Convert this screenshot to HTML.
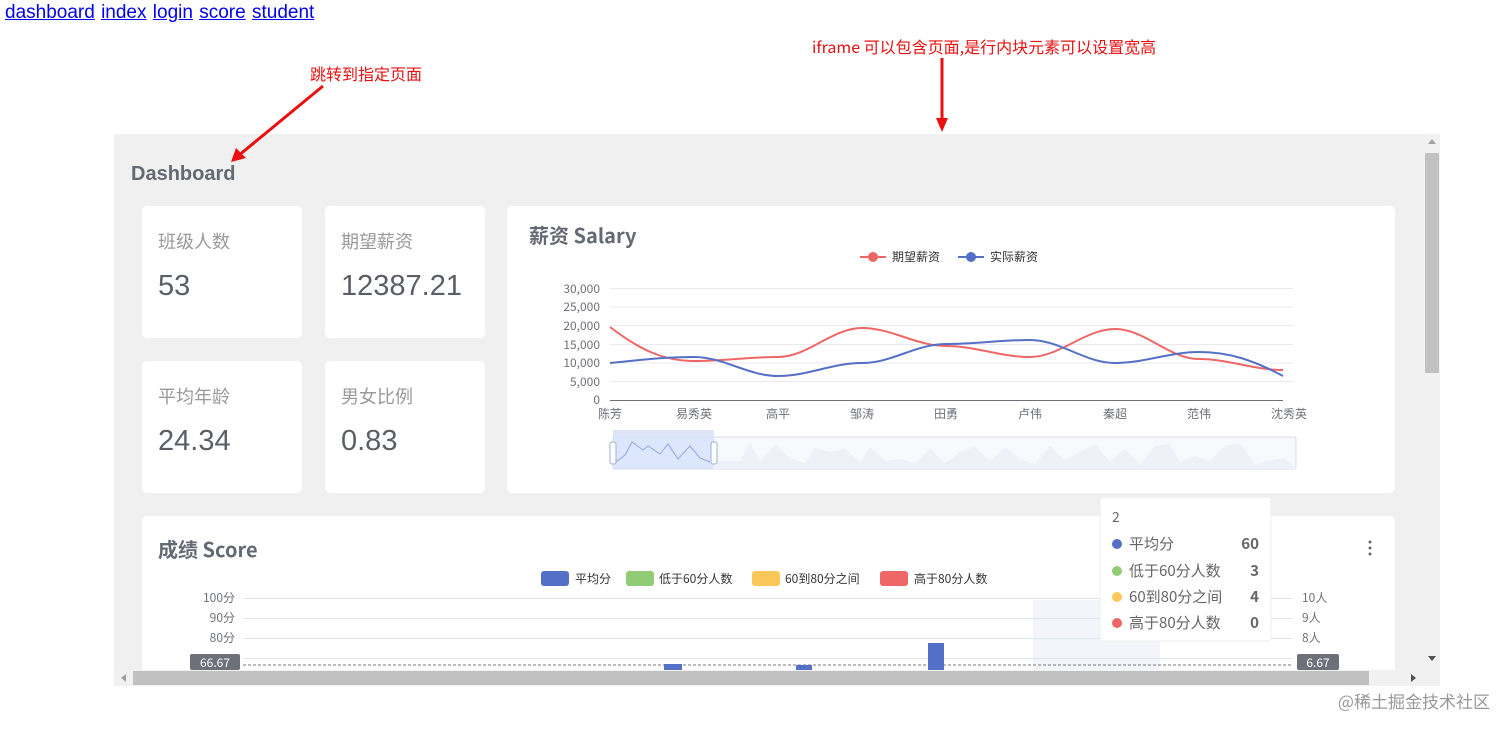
<!DOCTYPE html>
<html><head><meta charset="utf-8"><style>
*{box-sizing:border-box}
body{margin:0;width:1512px;height:733px;background:#fff;position:relative;overflow:hidden;font-family:"Liberation Sans","Noto Sans CJK SC",sans-serif}
.nav{position:absolute;left:5px;top:2px;font-size:19px;font-family:"Liberation Sans","Noto Sans CJK SC",sans-serif}
.nav a{color:#0000ee;text-decoration:underline;margin-right:1px}
.red{position:absolute;color:#e81010;font-size:16px;font-family:"Noto Sans CJK SC",sans-serif}
.frame{position:absolute;left:114px;top:134px;width:1326px;height:552px;background:#f0f0f0;overflow:hidden}
.card{position:absolute;background:#fff;border-radius:5px}
.lbl{position:absolute;left:16px;top:22px;font-size:18px;color:#999;font-family:"Noto Sans CJK SC",sans-serif}
.num{position:absolute;left:16px;top:64px;font-size:29px;color:#5a5f66}
.t{position:absolute;font-size:20px;font-weight:bold;color:#646a73;font-family:"Liberation Sans","Noto Sans CJK SC",sans-serif}
svg text{font-family:"Noto Sans CJK SC",sans-serif}
</style></head><body>
<div class="nav"><a>dashboard</a> <a>index</a> <a>login</a> <a>score</a> <a>student</a></div>
<div class="red" style="left:310px;top:61px">跳转到指定页面</div>
<div class="red" style="left:812px;top:34px">iframe 可以包含页面,是行内块元素可以设置宽高</div>
<div class="frame">
 <div class="t" style="left:17px;top:29px">Dashboard</div>
 <div class="card" style="left:28px;top:72px;width:160px;height:132px"><div class="lbl">班级人数</div><div class="num">53</div></div>
 <div class="card" style="left:211px;top:72px;width:160px;height:132px"><div class="lbl">期望薪资</div><div class="num">12387.21</div></div>
 <div class="card" style="left:28px;top:227px;width:160px;height:132px"><div class="lbl">平均年龄</div><div class="num">24.34</div></div>
 <div class="card" style="left:211px;top:227px;width:160px;height:132px"><div class="lbl">男女比例</div><div class="num">0.83</div></div>
 <div class="card" style="left:393px;top:72px;width:888px;height:287px"></div>
 <div class="card" style="left:28px;top:382px;width:1253px;height:200px"></div>
 <div style="position:absolute;left:1310px;top:0;width:16px;height:536px;background:#f1f1f1"><div style="position:absolute;left:1px;top:19px;width:14px;height:220px;background:#c1c1c1"></div></div>
 <div style="position:absolute;left:0;top:536px;width:1326px;height:16px;background:#f1f1f1"><div style="position:absolute;left:19px;top:1px;width:1236px;height:14px;background:#c1c1c1"></div></div>
</div>
<svg width="1512" height="733" style="position:absolute;left:0;top:0">
 <line x1="323" y1="86" x2="238" y2="156" stroke="#e81010" stroke-width="3"/>
 <polygon points="231,162 236,148 246,158" fill="#e81010"/>
 <line x1="942" y1="58" x2="942" y2="122" stroke="#e81010" stroke-width="3"/>
 <polygon points="942,132 936,118 948,118" fill="#e81010"/>
 <text x="529" y="243" font-size="20" font-weight="bold" fill="#646a73" font-family="Liberation Sans,Noto Sans CJK SC,sans-serif">薪资 Salary</text>
 <line x1="860" y1="257" x2="886" y2="257" stroke="#ee6666" stroke-width="2"/><circle cx="873" cy="257" r="5" fill="#ee6666"/>
 <text x="892" y="261" font-size="12" fill="#333">期望薪资</text>
 <line x1="958" y1="257" x2="984" y2="257" stroke="#5470c6" stroke-width="2"/><circle cx="971" cy="257" r="5" fill="#5470c6"/>
 <text x="990" y="261" font-size="12" fill="#333">实际薪资</text>
 <g stroke="#e8eaf0" stroke-width="1">
  <line x1="610" y1="288.5" x2="1293" y2="288.5"/><line x1="610" y1="307" x2="1293" y2="307"/><line x1="610" y1="325.5" x2="1293" y2="325.5"/><line x1="610" y1="344.5" x2="1293" y2="344.5"/><line x1="610" y1="363" x2="1293" y2="363"/><line x1="610" y1="381.5" x2="1293" y2="381.5"/>
 </g>
 <line x1="610" y1="400.5" x2="1283" y2="400.5" stroke="#6e7079"/>
 <g font-size="12" fill="#6e7079" text-anchor="end" font-family="Liberation Sans,sans-serif">
  <text x="600" y="293">30,000</text><text x="600" y="311">25,000</text><text x="600" y="330">20,000</text><text x="600" y="349">15,000</text><text x="600" y="367">10,000</text><text x="600" y="386">5,000</text><text x="600" y="404">0</text>
 </g>
 <g font-size="12" fill="#6e7079" text-anchor="middle">
  <text x="610" y="418">陈芳</text><text x="694" y="418">易秀英</text><text x="778" y="418">高平</text><text x="862" y="418">邹涛</text><text x="946" y="418">田勇</text><text x="1030" y="418">卢伟</text><text x="1115" y="418">秦超</text><text x="1199" y="418">范伟</text><text x="1289" y="418">沈秀英</text>
 </g>
 <path d="M610,327 C640,350 664,361 694,361 C724,361 748,357 778,357 C808,357 832,328 862,328 C892,328 916,346 946,346 C976,346 1000,357 1030,357 C1060,357 1085,329 1115,329 C1145,329 1169,359 1199,359 C1229,359 1253,370 1283,370" fill="none" stroke="#ee6666" stroke-width="2"/>
 <path d="M610,363 C640,360 664,357 694,357 C724,357 748,376 778,376 C808,376 832,363 862,363 C892,363 916,344 946,344 C976,344 1000,340 1030,340 C1060,340 1085,363 1115,363 C1145,363 1169,352 1199,352 C1229,352 1253,360 1283,376" fill="none" stroke="#5470c6" stroke-width="2"/>
 <rect x="613" y="437" width="683" height="32" fill="#f8f9fc" stroke="#d2dbee" rx="2"/>
 <path d="M715,461 L740,461 L750,443 L760,462 L775,445 L790,458 L805,463 L815,448 L830,452 L845,449 L860,462 L870,447 L885,461 L900,459 L915,463 L930,449 L945,463 L960,452 L975,447 L990,461 L1005,447 L1020,459 L1035,464 L1050,446 L1065,460 L1080,452 L1095,444 L1110,462 L1125,449 L1140,465 L1155,446 L1170,444 L1180,462 L1195,456 L1210,461 L1225,446 L1240,443 L1255,465 L1270,460 L1285,458 L1296,469 L715,469Z" fill="#eef1f7"/>
 <rect x="613" y="437" width="101" height="32" fill="#d5e1fb" opacity=".8"/>
 <rect x="613" y="430" width="101" height="7" fill="#dde5f6"/>
 <path d="M616,462 L625,455 L632,442 L643,450 L648,446 L660,454 L668,444 L678,459 L690,446 L700,458 L710,462" fill="none" stroke="#8fa7e0"/>
 <rect x="610" y="442" width="6" height="22" fill="#fff" stroke="#a0b0cc" rx="2"/><rect x="711" y="442" width="6" height="22" fill="#fff" stroke="#a0b0cc" rx="2"/>
 <text x="158" y="557" font-size="20" font-weight="bold" fill="#646a73" font-family="Liberation Sans,Noto Sans CJK SC,sans-serif">成绩 Score</text>
 <g fill="#646a73"><circle cx="1370" cy="542" r="1.5"/><circle cx="1370" cy="548" r="1.5"/><circle cx="1370" cy="554" r="1.5"/></g>
 <rect x="541" y="571" width="28" height="15" rx="3" fill="#5470c6"/><text x="575" y="583" font-size="12" fill="#333">平均分</text>
 <rect x="626" y="571" width="28" height="15" rx="3" fill="#91cc75"/><text x="659" y="583" font-size="12" fill="#333">低于60分人数</text>
 <rect x="752" y="571" width="28" height="15" rx="3" fill="#fac858"/><text x="785" y="583" font-size="12" fill="#333">60到80分之间</text>
 <rect x="880" y="571" width="28" height="15" rx="3" fill="#ee6666"/><text x="914" y="583" font-size="12" fill="#333">高于80分人数</text>
 <rect x="1033" y="600" width="127" height="70" fill="#f3f5fb"/>
 <g stroke="#e0e6f1"><line x1="243" y1="598.5" x2="1293" y2="598.5"/><line x1="243" y1="618.5" x2="1293" y2="618.5"/><line x1="243" y1="638.5" x2="1293" y2="638.5"/><line x1="243" y1="658.5" x2="1293" y2="658.5"/></g>
 <g font-size="12" fill="#6e7079"><text x="235" y="602" text-anchor="end">100分</text><text x="235" y="622" text-anchor="end">90分</text><text x="235" y="642" text-anchor="end">80分</text>
 <text x="1302" y="602">10人</text><text x="1302" y="622">9人</text><text x="1302" y="642">8人</text></g>
 <line x1="243" y1="665" x2="1293" y2="665" stroke="#777" stroke-dasharray="3,2"/>
 <rect x="190" y="654" width="50" height="16" rx="2" fill="#6e7079"/><text x="215" y="667" font-size="12" fill="#fff" text-anchor="middle" font-family="Liberation Sans,sans-serif">66.67</text>
 <rect x="1297" y="654" width="42" height="16" rx="2" fill="#6e7079"/><text x="1318" y="667" font-size="12" fill="#fff" text-anchor="middle" font-family="Liberation Sans,sans-serif">6.67</text>
 <rect x="664" y="664" width="18" height="6" fill="#5470c6"/><rect x="796" y="665" width="16" height="5" fill="#5470c6"/><rect x="928" y="643" width="16" height="27" fill="#5470c6"/>
 <rect x="1100" y="497" width="171" height="144" rx="4" fill="#fff" stroke="#eee"/>
 <text x="1112" y="522" font-size="14" fill="#666" font-family="Liberation Sans,sans-serif">2</text>
 <g font-size="15" fill="#666"><circle cx="1117" cy="544" r="5" fill="#5470c6"/><text x="1129" y="549">平均分</text>
 <circle cx="1117" cy="571" r="5" fill="#91cc75"/><text x="1129" y="576">低于60分人数</text>
 <circle cx="1117" cy="597" r="5" fill="#fac858"/><text x="1129" y="602">60到80分之间</text>
 <circle cx="1117" cy="623" r="5" fill="#ee6666"/><text x="1129" y="628">高于80分人数</text></g>
 <g font-size="15" font-weight="bold" fill="#666" text-anchor="end" font-family="Liberation Sans,sans-serif"><text x="1259" y="549">60</text><text x="1259" y="576">3</text><text x="1259" y="602">4</text><text x="1259" y="628">0</text></g>
 <polygon points="1428,656 1436,656 1432,661" fill="#505050"/><polygon points="1428,144 1436,144 1432,139" fill="#a0a0a0"/>
 <polygon points="1411,674 1411,682 1416,678" fill="#505050"/><polygon points="126,674 126,682 121,678" fill="#a0a0a0"/>
 <text x="1490" y="708" font-size="17" fill="#999" text-anchor="end">@稀土掘金技术社区</text>
</svg>
</body></html>
